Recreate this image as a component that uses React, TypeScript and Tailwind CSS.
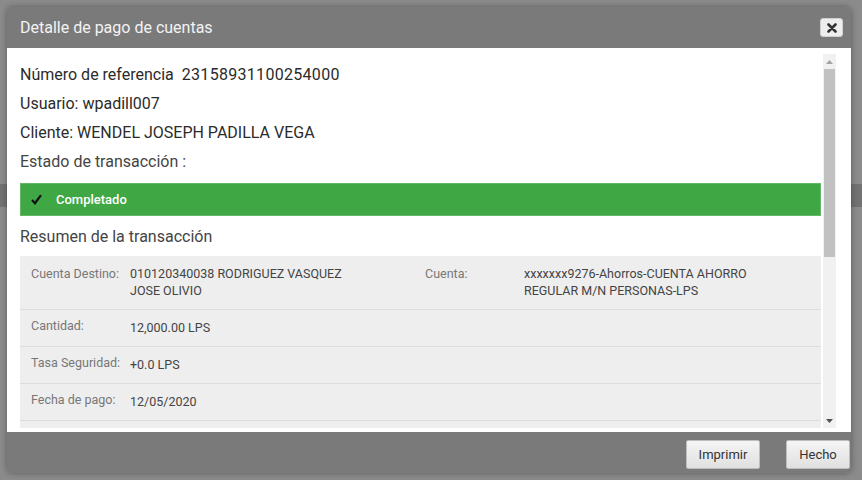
export default function App() {
  const rows = [
    { label: "Cantidad:", value: "12,000.00 LPS" },
    { label: "Tasa Seguridad:", value: "+0.0 LPS" },
    { label: "Fecha de pago:", value: "12/05/2020" },
  ];

  return (
    <div
      className="relative w-[862px] h-[480px] bg-[#8b8b8b] p-[7px] overflow-hidden"
      style={{ fontFamily: "Roboto, 'Liberation Sans', sans-serif" }}
    >
      {/* page behind the overlay */}
      <div className="absolute left-0 right-0 top-[184px] h-[23px] bg-[#727272]" />

      <div className="relative w-[844px] h-[466px] flex flex-col rounded-[5px] overflow-hidden shadow-[0_0_6px_rgba(0,0,0,0.35)]">
        {/* header */}
        <div className="h-[41px] bg-[#7a7a7b] flex items-center justify-between pl-[13px] pr-[8px]">
          <span className="text-[16px] text-[#f3f3f3]">Detalle de pago de cuentas</span>
          <button className="w-[23px] h-[19px] rounded-[3px] bg-[#eeeeee] border border-[#cfcfcf] flex items-center justify-center">
            <svg width="10" height="10" viewBox="0 0 10 10">
              <path d="M1.5 1.5 L8.5 8.5 M8.5 1.5 L1.5 8.5" stroke="#333" strokeWidth="2.6" strokeLinecap="round" />
            </svg>
          </button>
        </div>

        {/* body */}
        <div className="h-[384px] bg-white flex pl-[13px] pr-[14px] pb-[4px]">
          <div className="w-[801px] overflow-hidden text-[#2b2b2b]">
            <div className="pt-[12px] text-[16px]">
              <div className="h-[29px] leading-[29px]">
                Número de referencia<span className="ml-[8px] tracking-[0.3px]">23158931100254000</span>
              </div>
              <div className="h-[29px] leading-[29px]">Usuario: wpadill007</div>
              <div className="h-[29px] leading-[29px]">Cliente: WENDEL JOSEPH PADILLA VEGA</div>
              <div className="h-[29px] leading-[29px] text-[#444]">Estado de transacción :</div>
            </div>

            <div className="mt-[7px] h-[33px] bg-[#3fa743] border border-[#62b865] flex items-center pl-[10px]">
              <svg width="11" height="11" viewBox="0 0 11 11">
                <path d="M1 6 L4 9.2 L10 1.2" fill="none" stroke="#111" strokeWidth="2.2" />
              </svg>
              <span className="ml-[14px] text-[13px] font-medium text-white">Completado</span>
            </div>

            <div className="mt-[6px] h-[29px] leading-[29px] text-[16px] text-[#444]">Resumen de la transacción</div>

            <div className="mt-[5px] bg-[#eeeeee] text-[12.5px]">
              <div className="flex h-[54px] pt-[9px] border-b border-[#dddddd] leading-[17px]">
                <div className="w-[110px] pl-[11px] text-[#777]">Cuenta Destino:</div>
                <div className="w-[295px] text-[#444]">
                  <div className="max-w-[230px]">010120340038 RODRIGUEZ VASQUEZ JOSE OLIVIO</div>
                </div>
                <div className="w-[99px] text-[#777]">Cuenta:</div>
                <div className="flex-1 text-[#444]">
                  <div className="max-w-[250px]">xxxxxxx9276-Ahorros-CUENTA AHORRO REGULAR M/N PERSONAS-LPS</div>
                </div>
              </div>
              {rows.map((r) => (
                <div key={r.label} className="flex items-center h-[37px] border-b border-[#dddddd]">
                  <div className="w-[110px] pl-[11px] text-[#777] -mt-[3px]">{r.label}</div>
                  <div className="text-[#444]">{r.value}</div>
                </div>
              ))}
              <div className="h-[20px]" />
            </div>
          </div>

          {/* scrollbar */}
          <div className="ml-[2px] mt-[6px] w-[13px] bg-[#f1f1f1] flex flex-col items-center">
            <div className="h-[15px] w-full flex items-center justify-center">
              <svg width="7" height="4" viewBox="0 0 7 4">
                <path d="M0 4 L3.5 0 L7 4 Z" fill="#a3a3a3" />
              </svg>
            </div>
            <div className="w-[11px] h-[188px] bg-[#c1c1c1]" />
            <div className="flex-1" />
            <div className="h-[14px] w-full flex items-center justify-center">
              <svg width="7" height="4" viewBox="0 0 7 4">
                <path d="M0 0 L3.5 4 L7 0 Z" fill="#505050" />
              </svg>
            </div>
          </div>
        </div>

        {/* footer */}
        <div className="flex-1 bg-[#7a7a7b] flex items-start justify-end gap-[26px] pt-[8px] pr-[1px]">
          <button className="w-[74px] h-[29px] rounded-[2px] border border-[#bdbdbd] bg-gradient-to-b from-[#f5f5f5] to-[#e0e0e0] text-[13px] text-[#333]">
            Imprimir
          </button>
          <button className="w-[64px] h-[29px] rounded-[2px] border border-[#bdbdbd] bg-gradient-to-b from-[#f5f5f5] to-[#e0e0e0] text-[13px] text-[#333]">
            Hecho
          </button>
        </div>
      </div>
    </div>
  );
}
